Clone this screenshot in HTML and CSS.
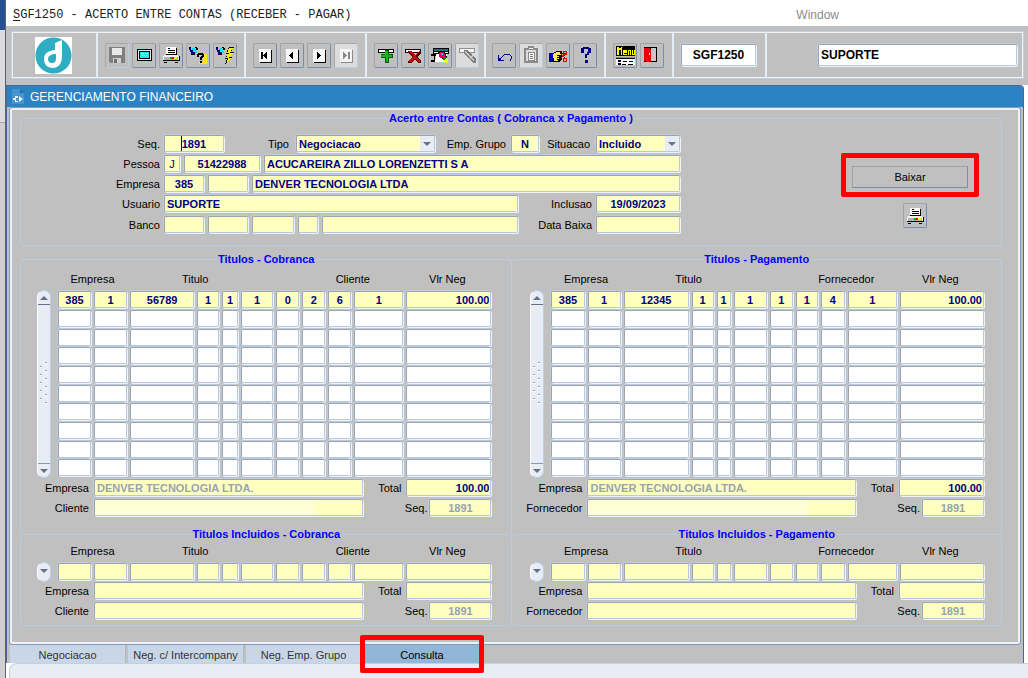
FILE: index.html
```html
<!DOCTYPE html>
<html lang="pt-BR">
<head>
<meta charset="utf-8">
<title>SGF1250 - Acerto entre Contas</title>
<link rel="stylesheet" href="styles.css">
</head>
<body>
<svg class="defs" aria-hidden="true">
  <symbol id="printer" viewBox="0 0 20 20">
    <path fill="#fff" d="M5 2h10l1 8H5z"/><path fill="#000" d="M7 3h2v1H7zM7 5h7v1H7zM7 7h7v1H7zM15 3h1v7h-1zM5 9h11v1H5z"/>
    <path fill="#f4f4f4" d="M3 10h14v1h1v4H2v-4h1z"/><path fill="#b0b0b0" d="M3 12h14v3H3z"/>
    <path fill="#000" d="M2 15h16v1H2zM3 17h3v1H3zM14 17h3v1h-3zM18 11h1v5h-1z"/>
    <path fill="#e00" d="M11 12h2v2h-2z"/><path fill="#0a0" d="M9 12h2v2H9z"/><path fill="#ff0" d="M13 12h3v2h-3z"/>
  </symbol>
  <symbol id="torch" viewBox="0 0 20 20">
    <path fill="#00007c" d="M1 3h2v2h2v2h2v2H5v1H3V7H2V5H1z"/><path fill="#00e0f0" d="M4 3h3v1h1v2h1v2H7V6H5V5H4z"/><path fill="#000" d="M1 2h2v1H1zM7 2h2v1h1v2H8V3H7zM4 9h3v1H4z"/>
  </symbol>
  <symbol id="key" viewBox="0 0 20 20">
    <path fill="#f8f8f8" d="M4 4h12v13H4z"/><path fill="#000" d="M16 5h1v13H5v-1h11z"/>
  </symbol>
</svg>
<div class="screen">
  <div class="desktop-edge"></div>
  <div class="app">
    <header class="menubar">
      <span class="menu-title"><u>S</u>GF1250 - ACERTO ENTRE CONTAS (RECEBER - PAGAR)</span>
      <span class="menu-window">Window</span>
    </header>
    <div class="toolbar">
      <div class="toolbox">
        <div class="group group-logo">
          <svg class="logo" viewBox="0 0 37 37" role="img" aria-label="Logo"><path fill="#fff" d="M0 0h37v37H0z"/><circle cx="18.500" cy="18.500" r="18" fill="#2fadc2"/><path fill="#fff" d="M20 6l7-3v16c0 8-4 12-9 12-6 0-9-4-9-9 0-5 3-8 11-9z"/><path fill="#2fadc2" d="M21 17c-5 0-8 2-8 5 0 2 1 4 4 4 3 0 4-2 4-5z"/></svg>
        </div>
        <div class="group group-file">
          <button class="tool off" aria-label="Salvar"><svg viewBox="0 0 20 20"><path fill="#808080" d="M2 2h16v16H3l-1-1z"/><path fill="#e8e8e8" d="M5 3h10v7H5z"/><path fill="#d0d0d0" d="M6 13h8v5H6z"/><path fill="#707070" d="M7 14h3v4H7zM16 3h1v1h-1z"/></svg></button>
          <button class="tool" aria-label="Tela"><svg viewBox="0 0 20 20"><path fill="#000" d="M3 4h15v12H3z"/><path fill="#e8e8e8" d="M4 5h13v10H4z"/><path fill="#000" d="M5 6h11v8H5z"/><path fill="#38e0e8" d="M6 7h9v6H6z"/><path fill="#fff" d="M7 8h1v1H7zM9 8h1v1H9zM11 8h1v1h-1zM13 8h1v1h-1zM8 10h1v1H8zM10 10h1v1h-1zM12 10h1v1h-1z"/></svg></button>
          <button class="tool" aria-label="Imprimir"><svg viewBox="0 0 20 20"><use href="#printer"/></svg></button>
          <button class="tool" aria-label="Entrar consulta"><svg viewBox="0 0 20 20"><use href="#torch"/><path fill="#ffe800" d="M9 10h3v1H9zM15 9h4v10h-8v-2h4z"/><path fill="#000" d="M10 8h5v1h1v3h-1v1h-1v2h-2v-3h1v-1h1V10h-3v2H9V9h1zM12 16h2v2h-2z"/></svg></button>
          <button class="tool" aria-label="Executar consulta"><svg viewBox="0 0 20 20"><use href="#torch"/><path fill="#000" d="M14 2h5l-3 5h3l-4 5h2l-7 8 2-6h-2l3-5h-2z"/><path fill="#ffef00" d="M14 3h4l-3 5h3l-4 5h2l-4 5 1-5h-2l3-5h-2z"/></svg></button>
        </div>
        <div class="group group-nav">
          <button class="tool" aria-label="Primeiro"><svg viewBox="0 0 20 20"><use href="#key"/><path d="M6 7h2v7H6zM8 10h1V9h1V8h1V7h1v7h-1v-1h-1v-1H9v-1H8z"/></svg></button>
          <button class="tool" aria-label="Anterior"><svg viewBox="0 0 20 20"><use href="#key"/><path d="M7 10h1V9h1V8h1V7h1v7h-1v-1H9v-1H8v-1H7z"/></svg></button>
          <button class="tool" aria-label="Proximo"><svg viewBox="0 0 20 20"><use href="#key"/><path d="M12 10h-1V9h-1V8H9V7H8v7h1v-1h1v-1h1v-1h1z"/></svg></button>
          <button class="tool off pale" aria-label="Ultimo"><svg viewBox="0 0 20 20"><path fill="#f4f4f4" d="M4 4h12v13H4z"/><path fill="#888" d="M12 7h2v7h-2zM11 10h-1V9H9V8H8V7H7v7h1v-1h1v-1h1v-1h1zM16 5h1v13H5v-1h11z"/></svg></button>
        </div>
        <div class="group group-edit">
          <button class="tool" aria-label="Inserir"><svg viewBox="0 0 20 20"><path d="M2 4h16v4H2z"/><path fill="#fff" d="M3 5h14v2H3z"/><path fill="#045c04" d="M9 5h4v4h4v4h-4v5H9v-5H5V9h4z"/><path fill="#18b818" d="M9 6h3v4h4v2h-4v5h-2v-5H5v-2h4z"/></svg></button>
          <button class="tool" aria-label="Remover"><svg viewBox="0 0 20 20"><path d="M2 4h16v4H2z"/><path fill="#fff" d="M3 5h14v2H3z"/><path fill="#500" d="M5 6h3l4 4 4-4h2v2l-4 4 4 4v2h-3l-3-4-4 4H5v-2l4-4-4-4z"/><path fill="#c01010" d="M6 6h2l4 4 4-4h1l-4 5 4 5v1h-2l-3-4-4 4H6v-2l4-4-4-4z"/></svg></button>
          <button class="tool" aria-label="Pesquisar"><svg viewBox="0 0 20 20"><path d="M3 3h16v6H3zM1 9h5v2H5v6H1v-2h3v-4H1z"/><path fill="#087878" d="M4 4h14v2H4z"/><path fill="#fff" d="M4 7h14v1H4zM6 9h11v8H5v-3h1z"/><path d="M8 7h7l2 5-2 3-5-3z"/><circle cx="12" cy="10" r="3" fill="#e00050"/><path fill="#00c0e0" d="M11 8h2v2h-2z"/><path fill="#080" d="M13 12h3v3h-3z"/><path fill="#ff0" d="M15 14h3v4h-2l-2-2z"/></svg></button>
          <button class="tool off pale" aria-label="Limpar"><svg viewBox="0 0 20 20"><path fill="#909090" d="M2 3h16v5H2z"/><path fill="#f4f4f4" d="M3 4h14v3H3z"/><path fill="#808080" d="M7 5h3l9 9v4h-3L7 9z"/><path fill="#c8c8c8" d="M8 6h1l8 9-1 1-8-8zM12 13l3-3 1 1-3 3z"/></svg></button>
        </div>
        <div class="group group-clip">
          <button class="tool" aria-label="Desfazer"><svg viewBox="0 0 20 20"><path fill="none" stroke="#000080" d="M6 14l4-4 2-1h3l2 2v3l-1 2"/><path fill="#000080" d="M4 10h1v4h1v1h4v1H4z"/><path fill="#000080" d="M5 13h2v2H5z"/></svg></button>
          <button class="tool off pale" aria-label="Colar"><svg viewBox="0 0 20 20"><path fill="#8a8a8a" d="M3 3h14v15H3z"/><path fill="#ddd" d="M5 5h10v11H5z"/><path fill="#8a8a8a" d="M7 1h6v4H7zM7 7h7v9H7z"/><path fill="#f8f8f8" d="M8 3h4v1H8zM8 8h5v7H8z"/><path fill="#777" d="M9 9h3v1H9zM9 11h3v1H9zM9 13h3v1H9z"/></svg></button>
          <button class="tool" aria-label="Recortar"><svg viewBox="0 0 20 20"><path fill="#0000c0" d="M1 8h4v9H1z"/><path d="M5 8l4-2h5v2h3v3h-3v4l-3 2H5z"/><path fill="#ffe860" d="M5 9l4-2h3v2h4v1h-5v5l-2 1H6z"/><path d="M9 10h4v1H9zM9 12h4v1H9zM9 14h4v1H9z"/><path fill="none" stroke="#e00000" d="M15 6h3v3h-3zM15 13h3v3h-3zM13 13l5-5M13 9l4 4"/></svg></button>
          <button class="tool" aria-label="Ajuda"><svg viewBox="0 0 20 20"><path fill="#000080" d="M6 3h2V2h6v1h2v5h-2v2h-2v3h-2V9h2V7h1V4H9v4H6zM10 15h3v3h-3z"/></svg></button>
        </div>
        <div class="group group-exit">
          <button class="tool" aria-label="Menu"><svg viewBox="0 0 20 20"><path d="M1 1h19v10H1z"/><path fill="#ff0" d="M2 2h2l1 2 1-2h1v8H6V5H4v5H2zM8 5h4v3H9v1h3v1H8zM13 5h3v5h-1V6h-1v4h-1zM17 5h1v4h1V5h1v5h-3z"/><path fill="#00c8d0" d="M1 12h19v1H1z"/><path d="M1 13h19v1H1z"/><path fill="#fff" d="M1 14h19v6H1z"/><path d="M3 15h3v2H3zM8 16h4v1H8zM14 16h4v1h-4zM3 18h3v2H3zM7 19h4v1H7zM13 19h5v1h-5z"/></svg></button>
          <button class="tool" aria-label="Sair"><svg viewBox="0 0 20 20"><path d="M2 2h13v15H2z"/><path fill="#c8c8c8" d="M9 3h5v13H9z"/><path fill="#f00000" d="M2 3h5l2 1v12l-3 1-4-1z"/><path fill="#ff0" d="M7 8h1v2H7z"/></svg></button>
        </div>
        <div class="group group-code"><input class="plain center" aria-label="Programa" value="SGF1250"></div>
        <div class="group group-user"><input class="plain" aria-label="Usuario conectado" value="SUPORTE"></div>
      </div>
    </div>
    <div class="window">
      <h1 class="titlebar"><svg class="doc" viewBox="0 0 12 15"><path fill="#4595cf" d="M0 0h8l4 4v11H0z"/><path fill="#1f6dab" d="M8 0l4 4H8z"/><path fill="#e8f4ff" d="M1 9h2V7h3v2H4v3h2v1H3v-2H1zM7 7l4 3-4 3z"/></svg>GERENCIAMENTO FINANCEIRO</h1>
      <main class="canvas">
        <fieldset class="box summary">
          <legend>Acerto entre Contas ( Cobranca x Pagamento )</legend>
          <div class="summary-body">
            <div class="form">
              <div class="line">
                <label class="lead" for="seq">Seq.</label><span class="caret"><input id="seq" class="w60 center" value="1891"></span>
                <label class="lab-tipo" for="tipo">Tipo</label><span class="drop drop-wide"><select id="tipo"><option>Negociacao</option></select></span>
                <label class="lab-grupo" for="grupo">Emp. Grupo</label><input id="grupo" class="w28 center" value="N">
                <label class="fill" for="sit">Situacao</label><span class="drop"><select id="sit"><option>Incluido</option></select></span>
              </div>
              <div class="line">
                <label class="lead" for="pes">Pessoa</label><input id="pes" class="w16 center light" value="J"><input class="w76 center" aria-label="Codigo da pessoa" value="51422988"><input class="grow" aria-label="Nome da pessoa" value="ACUCAREIRA ZILLO LORENZETTI S A">
              </div>
              <div class="line">
                <label class="lead" for="emp">Empresa</label><input id="emp" class="w40 center" value="385"><input class="w40" aria-label="Filial"><input class="grow" aria-label="Nome da empresa" value="DENVER TECNOLOGIA LTDA">
              </div>
              <div class="line">
                <label class="lead" for="usu">Usuario</label><input id="usu" class="grow" value="SUPORTE"><label class="side" for="inc">Inclusao</label><input id="inc" class="w84 center" value="19/09/2023">
              </div>
              <div class="line last">
                <label class="lead" for="ban">Banco</label><input id="ban" class="w40"><input class="w40" aria-label="Agencia"><input class="w42" aria-label="Conta"><input class="w20" aria-label="Digito"><input class="grow" aria-label="Nome do banco"><label class="side" for="dat">Data Baixa</label><input id="dat" class="w84">
              </div>
            </div>
            <div class="actions">
              <div class="mark"><button class="push">Baixar</button></div>
              <button class="tool" aria-label="Imprimir acerto"><svg viewBox="0 0 20 20"><use href="#printer"/></svg></button>
            </div>
          </div>
        </fieldset>
        <div class="panels">
          <fieldset class="box upper left">
            <legend>Titulos - Cobranca</legend>
            <div class="list">
              <div class="scroll"><button class="up" aria-label="Acima"></button><span class="grip"></span><button class="down" aria-label="Abaixo"></button></div>
              <table class="titles" data-kind="cobranca" data-party="Cliente" data-rows="10"></table>
            </div>
            <div class="foot">
              <div class="line"><label class="lead" for="ce">Empresa</label><input id="ce" class="grow dim" value="DENVER TECNOLOGIA LTDA."><span class="pair"><label for="ct">Total</label><input id="ct" class="w85 right" value="100.00"></span></div>
              <div class="line"><label class="lead" for="cc">Cliente</label><input id="cc" class="grow smear"><span class="pair tight"><label for="cs">Seq.</label><input id="cs" class="w62 center dim" value="1891"></span></div>
            </div>
          </fieldset>
          <fieldset class="box upper rightside">
            <legend>Titulos - Pagamento</legend>
            <div class="list">
              <div class="scroll"><button class="up" aria-label="Acima"></button><span class="grip"></span><button class="down" aria-label="Abaixo"></button></div>
              <table class="titles" data-kind="pagamento" data-party="Fornecedor" data-rows="10"></table>
            </div>
            <div class="foot">
              <div class="line"><label class="lead" for="pe">Empresa</label><input id="pe" class="grow dim" value="DENVER TECNOLOGIA LTDA."><span class="pair"><label for="pt">Total</label><input id="pt" class="w85 right" value="100.00"></span></div>
              <div class="line"><label class="lead" for="pf">Fornecedor</label><input id="pf" class="grow smear"><span class="pair tight"><label for="ps">Seq.</label><input id="ps" class="w62 center dim" value="1891"></span></div>
            </div>
          </fieldset>
          <fieldset class="box lower left">
            <legend>Titulos Incluidos - Cobranca</legend>
            <div class="list">
              <div class="scroll single"><button class="down" aria-label="Abaixo"></button></div>
              <table class="titles" data-kind="cobranca" data-party="Cliente" data-rows="1" data-empty></table>
            </div>
            <div class="foot">
              <div class="line"><label class="lead" for="ice">Empresa</label><input id="ice" class="grow"><span class="pair"><label for="ict">Total</label><input id="ict" class="w85"></span></div>
              <div class="line"><label class="lead" for="icc">Cliente</label><input id="icc" class="grow"><span class="pair tight"><label for="ics">Seq.</label><input id="ics" class="w62 center dim" value="1891"></span></div>
            </div>
          </fieldset>
          <fieldset class="box lower rightside">
            <legend>Titulos Incluidos - Pagamento</legend>
            <div class="list">
              <div class="scroll single"><button class="down" aria-label="Abaixo"></button></div>
              <table class="titles" data-kind="pagamento" data-party="Fornecedor" data-rows="1" data-empty></table>
            </div>
            <div class="foot">
              <div class="line"><label class="lead" for="ipe">Empresa</label><input id="ipe" class="grow"><span class="pair"><label for="ipt">Total</label><input id="ipt" class="w85"></span></div>
              <div class="line"><label class="lead" for="ipf">Fornecedor</label><input id="ipf" class="grow"><span class="pair tight"><label for="ips">Seq.</label><input id="ips" class="w62 center dim" value="1891"></span></div>
            </div>
          </fieldset>
        </div>
      </main>
      <nav class="tabs">
        <button class="tab">Negociacao</button>
        <button class="tab">Neg. c/ Intercompany</button>
        <button class="tab">Neg. Emp. Grupo</button>
        <button class="tab active">Consulta</button>
      </nav>
    </div>
    <footer class="status"></footer>
  </div>
</div>
<script src="app.js"></script>
</body>
</html>
```

FILE: styles.css
```css
* { box-sizing: border-box; }

body {
  margin: 0;
  font: 11px/14px "Liberation Sans", Arial, sans-serif;
  color: #000;
  background: #fff;
}

.defs { position: absolute; width: 0; height: 0; }
.screen { display: flex; min-height: 100vh; overflow: hidden; }
.app { flex: 1; min-width: 0; display: flex; flex-direction: column; }

.desktop-edge {
  flex: none;
  width: 6px;
  background: linear-gradient(#244f90 30px, #dcdcdc 30px 122px, #a8a8a8 122px 123px, #cfcfcf 123px);
  border-right: 1px solid #5a6470;
}

/* Menu bar */
.menubar {
  display: flex;
  align-items: center;
  height: 26px;
  padding: 3px 189px 0 7px;
  background: #fff;
}
.menu-title { font: 12px/14px "Liberation Mono", monospace; color: #222; white-space: nowrap; }
.menu-title u { text-underline-offset: 2px; }
.menu-window { margin-left: auto; font-size: 12px; color: #8c8c8c; }

/* Toolbar */
.toolbar { padding: 5px 4px 6px 5px; background: #c0c0c0; }
.toolbox { display: flex; height: 48px; border: 1px solid #bcd0e8; box-shadow: inset 0 0 0 1px #eef3fa; }
.group {
  display: flex;
  align-items: center;
  gap: 3px;
  padding-left: 7px;
  border-right: 2px solid #e4ecf6;
}
.group-logo { width: 86px; padding-left: 23px; }
.group-file { width: 148px; }
.group-nav { width: 121px; }
.group-edit { width: 119px; }
.group-clip { width: 120px; padding-left: 6px; }
.group-exit { width: 68px; }
.group-code { width: 93px; padding-right: 9px; }
.group-user { flex: 1; justify-content: flex-end; padding-right: 6px; border-right: 0; }
.logo { width: 37px; height: 37px; }

button { font: inherit; color: inherit; padding: 0; border: 0; background: none; }
.tool {
  flex: none;
  display: grid;
  place-items: center;
  width: 24px;
  height: 25px;
  border: 1px solid;
  border-color: #a4a4a4 #7090b0 #7090b0 #a4a4a4;
  border-radius: 2px;
  background: #c0c0c0;
}
.tool svg { width: 20px; height: 20px; shape-rendering: crispEdges; }
.tool.off { border-color: #a8a8a8 #b8cce4 #b8cce4 #a8a8a8; }
.tool.pale { background: #dcdcdc; }

/* Fields */
input, select {
  min-width: 0;
  height: 17px;
  margin: 0;
  padding: 0 2px;
  font: bold 11px/15px "Liberation Sans", Arial, sans-serif;
  color: #000080;
  background: #ffffc0;
  border: 1px solid;
  border-color: #9ea4ac #b4cae2 #b4cae2 #9ea4ac;
  border-radius: 2px;
  box-shadow: 1px 1px 0 #eef3fa, -1px -1px 0 #bccbdd;
  outline: 0;
}
input.plain { height: 22px; width: 100%; color: #000; background: #fff; font-size: 12px; }
.group-user input.plain { width: 199px; }
.center { text-align: center; }
.right { text-align: right; padding-right: 1px; }
.grow { flex: 1; }
.light { font-weight: normal; }
.dim { color: #96a4b0; }
.smear { background: linear-gradient(90deg, #ffffd6 218px, #ffffc0 222px); }
.w16 { width: 16px; }
.w20 { width: 20px; }
.w28 { width: 28px; }
.w40 { width: 40px; }
.w42 { width: 42px; }
.w60 { width: 60px; }
.w62 { width: 62px; }
.w76 { width: 76px; }
.w84 { width: 84px; }
.w85 { width: 85px; }

.drop { position: relative; display: flex; width: 84px; }
.drop-wide { width: 139px; }
.drop select { width: 100%; padding-top: 1px; appearance: none; }
.drop::before {
  content: "";
  position: absolute;
  inset: 1px 1px 1px auto;
  width: 14px;
  background: #e8edf5;
  pointer-events: none;
}
.drop::after {
  content: "";
  position: absolute;
  top: 7px;
  right: 4px;
  border: 4px solid transparent;
  border-top-color: #687088;
  border-bottom: 0;
  pointer-events: none;
}
.caret { position: relative; display: flex; }
.caret::after { content: ""; position: absolute; left: 17px; top: 1px; width: 1px; height: 15px; background: #000080; }

/* Window */
.window {
  margin-right: 4px;
  background: #c0c0c0;
  border: solid #47699a;
  border-width: 1px 1px 0 1px;
  border-radius: 0 4px 0 0;
}
.titlebar {
  display: flex;
  align-items: center;
  gap: 6px;
  height: 21px;
  margin: 0;
  padding: 0 0 0 5px;
  font: 12px/16px "Liberation Sans", Arial, sans-serif;
  color: #fff;
  background: #2b83c4;
  border-radius: 0 3px 0 0;
}
.doc { width: 12px; height: 15px; }
.canvas {
  margin: 0 2px;
  padding: 3px 18px 18px 10px;
  border: 1px solid #7f9db9;
  border-radius: 3px;
  box-shadow: inset 0 0 0 2px #eef2f8;
}

.box { min-width: 0; margin: 0; padding: 0; border: 1px solid #b8cce4; border-radius: 4px; }
legend { margin: 0 auto; padding: 0 1px; font-weight: bold; line-height: 14px; color: #0000ff; }
.line { display: flex; align-items: center; gap: 4px; }
.line label { white-space: nowrap; text-align: right; }

.summary { padding: 10px 0 12px; }
.summary-body { display: flex; }
.form { width: 659px; display: grid; gap: 3px; }
.form .lead { width: 139px; }
.form .side { width: 70px; }
.form .last { padding-top: 1px; }
.form .fill { flex: 1; padding-right: 2px; }
.lab-tipo { width: 64px; padding-right: 3px; }
.lab-grupo { width: 68px; padding-right: 1px; }
.actions { display: flex; flex-direction: column; align-items: center; gap: 6px; margin: 18px 22px 0 auto; }
.actions .tool { margin-left: 9px; }
.mark { padding: 8px 6px 4px; border: 5px solid #ff0000; border-radius: 2px; }
.push {
  display: block;
  width: 116px;
  height: 22px;
  border: 1px solid;
  border-color: #a0a0a0 #7090b0 #7090b0 #a0a0a0;
}

.panels { display: grid; grid-template-columns: 493fr 490fr; margin-top: 6px; }
.rightside { margin-left: -1px; }
.upper { padding: 6px 0 18px; border-bottom: 0; border-radius: 4px 4px 0 0; }
.lower { margin-top: -7px; padding: 3px 0 6px; }
.left .list { padding: 0 20px 0 16px; }
.rightside .list { padding: 0 17px 0 18px; }
.left .foot { padding-right: 20px; }
.rightside .foot { padding-right: 17px; }
.list { display: flex; gap: 7px; }

.scroll {
  flex: none;
  display: flex;
  flex-direction: column;
  justify-content: space-between;
  align-items: center;
  width: 14px;
  margin: 18px 0 0;
  background: #e8edf5;
  border: 1px solid #c0d0e4;
  border-left-color: #fff;
  border-radius: 7px;
}
.scroll button { display: grid; place-items: center; width: 12px; height: 14px; }
.scroll button::after { content: ""; width: 0; height: 0; border: 4px solid transparent; }
.scroll .up { border-bottom: 1px solid #687088; }
.scroll .up::after { border-bottom-color: #687088; border-top: 0; }
.scroll .down { border-top: 1px solid #7f9db9; }
.scroll .down::after { border-top-color: #687088; border-bottom: 0; }
.scroll.single .down { height: 16px; border: 0; }
.grip {
  width: 10px;
  height: 44px;
  background:
    repeating-linear-gradient(#8ea4bc 0 1px, #fff 1px 2px, transparent 2px 8px) 1px 4px / 2px 36px no-repeat,
    repeating-linear-gradient(#8ea4bc 0 1px, #fff 1px 2px, transparent 2px 8px) 6px 0 / 2px 44px no-repeat;
}

.titles { flex: 1; min-width: 0; width: 100%; table-layout: fixed; border-collapse: collapse; }
.titles th { height: 19px; padding: 0 3px 4px 0; font-weight: normal; line-height: 14px; vertical-align: top; }
.titles th.title { padding-right: 16px; }
.titles td { height: 19px; padding: 0 3px 0 0; vertical-align: top; line-height: 0; }
.titles tr:nth-child(3n) td { height: 18px; }
.titles td:last-child { padding-right: 0; }
.titles input { display: block; width: 100%; padding: 0; }
.titles input.right { padding-right: 1px; }
.titles input.blank { background: #fff; }

.foot { display: grid; gap: 3px; padding-top: 1px; }
.lower .foot { padding-top: 0; }
.foot .line { gap: 5px; }
.left .lead { width: 68px; }
.rightside .lead { width: 70px; }
.pair { display: flex; align-items: center; gap: 5px; width: 123px; }
.pair.tight { gap: 2px; }
.pair label { flex: 1; }

/* Tabs and status */
.tabs { display: flex; gap: 2px; padding-left: 3px; }
.tab {
  position: relative;
  width: 116px;
  height: 18px;
  padding-top: 2px;
  color: #333;
  background: #c8d6e8;
  border-right: 1px solid #b0b8c4;
}
.tab.active { color: #000; background: #92b6d8; border: 1px solid #7890a8; border-top: 0; border-bottom: 0; }
.tab.active::after { content: ""; position: absolute; inset: -10px -5px; border: 5px solid #ff0000; border-radius: 2px; }
.status { flex: 1; min-height: 15px; margin-left: 3px; background: #e8edf5; border: 1px solid #c0d2e6; border-width: 1px 0 0 1px; border-radius: 8px 0 0 0; }
```

FILE: app.js
```js
const layouts = {
  cobranca: {
    widths: [36, 36, 67, 25, 19, 35, 26, 26, 26, 52, 85],
    values: ["385", "1", "56789", "1", "1", "1", "0", "2", "6", "1", "100.00"]
  },
  pagamento: {
    widths: [36, 36, 68, 25, 17, 36, 26, 25, 27, 52, 84],
    values: ["385", "1", "12345", "1", "1", "1", "1", "1", "4", "1", "100.00"]
  }
};

document.querySelectorAll(".titles").forEach(table => {
  const { widths, values } = layouts[table.dataset.kind];
  const empty = "empty" in table.dataset;
  const cols = widths.map(w => `<col style="width:${w}px">`).join("");
  const rows = [];
  for (let r = 0; r < Number(table.dataset.rows); r++) {
    const cells = values.map((v, c) => {
      const align = c === values.length - 1 ? "right" : "center";
      const blank = r > 0 ? " blank" : "";
      const value = r === 0 && !empty ? v : "";
      return `<td><input class="${align}${blank}" aria-label="Linha ${r + 1}, coluna ${c + 1}" value="${value}"></td>`;
    });
    rows.push(`<tr>${cells.join("")}</tr>`);
  }
  table.innerHTML = `<colgroup>${cols}</colgroup>
    <thead><tr><th colspan="2">Empresa</th><th colspan="4" class="title">Titulo</th><th></th>
    <th colspan="3">${table.dataset.party}</th><th>Vlr Neg</th></tr></thead>
    <tbody>${rows.join("")}</tbody>`;
});
```
